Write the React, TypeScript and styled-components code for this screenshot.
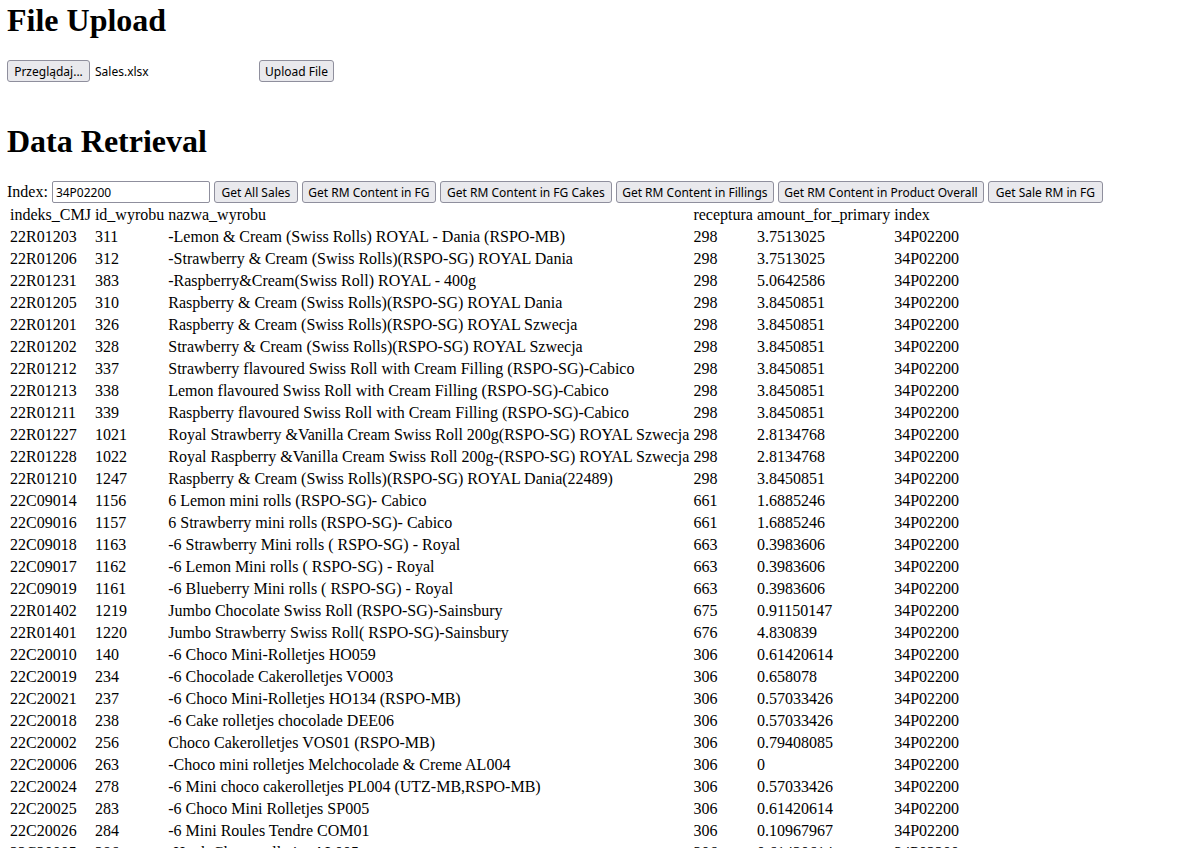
import React, { useRef, useState } from 'react';
import styled, { createGlobalStyle } from 'styled-components';

const GlobalStyle = createGlobalStyle`
  body {
    margin: 0;
    background: #fff;
    color: #000;
    font: 16px/18px "Liberation Serif", "Times New Roman", serif;
  }
`;

const Page = styled.main`
  padding: 2px 7px 8px;
`;

const Title = styled.h1`
  margin: 0 0 22px;
  font-size: 32px;
  line-height: 36px;
  font-weight: bold;
`;

const UploadForm = styled.form`
  display: flex;
  align-items: center;
  margin-bottom: 41px;
`;

const FilePicker = styled.div`
  display: flex;
  align-items: center;
  gap: 5px;
  width: 252px;
`;

const HiddenFile = styled.input`
  display: none;
`;

const FileName = styled.span`
  padding-top: 2px;
  font: 12px/18px "Noto Sans", Tahoma, sans-serif;
`;

const Button = styled.button<{ $width: number }>`
  box-sizing: border-box;
  min-width: ${(p) => p.$width}px;
  height: 22px;
  padding: 2px 4px 0;
  border: 1px solid #8f8f9d;
  border-radius: 3px;
  background: #e9e9ed;
  color: #000;
  font: 12px/18px "Noto Sans", Tahoma, sans-serif;
  white-space: nowrap;
`;

const Toolbar = styled.div`
  display: flex;
  flex-wrap: wrap;
  align-items: center;
  gap: 4px;
`;

const IndexInput = styled.input`
  box-sizing: border-box;
  width: 158px;
  height: 22px;
  padding: 0 3px;
  border: 1px solid #8f8f9d;
  border-radius: 2px;
  background: #fff;
  color: #000;
  font: 12px/18px "Noto Sans", Tahoma, sans-serif;
`;

const DataTable = styled.table`
  border-spacing: 2px;
  white-space: nowrap;
`;

const HeadCell = styled.th`
  padding: 1px;
  font-weight: normal;
  text-align: left;
`;

const Cell = styled.td`
  padding: 1px;
`;

const columns = ['indeks_CMJ', 'id_wyrobu', 'nazwa_wyrobu', 'receptura', 'amount_for_primary', 'index'];

const rows = [
  ['22R01203', '311', '-Lemon & Cream (Swiss Rolls) ROYAL - Dania (RSPO-MB)', '298', '3.7513025'],
  ['22R01206', '312', '-Strawberry & Cream (Swiss Rolls)(RSPO-SG) ROYAL Dania', '298', '3.7513025'],
  ['22R01231', '383', '-Raspberry&Cream(Swiss Roll) ROYAL - 400g', '298', '5.0642586'],
  ['22R01205', '310', 'Raspberry & Cream (Swiss Rolls)(RSPO-SG) ROYAL Dania', '298', '3.8450851'],
  ['22R01201', '326', 'Raspberry & Cream (Swiss Rolls)(RSPO-SG) ROYAL Szwecja', '298', '3.8450851'],
  ['22R01202', '328', 'Strawberry & Cream (Swiss Rolls)(RSPO-SG) ROYAL Szwecja', '298', '3.8450851'],
  ['22R01212', '337', 'Strawberry flavoured Swiss Roll with Cream Filling (RSPO-SG)-Cabico', '298', '3.8450851'],
  ['22R01213', '338', 'Lemon flavoured Swiss Roll with Cream Filling (RSPO-SG)-Cabico', '298', '3.8450851'],
  ['22R01211', '339', 'Raspberry flavoured Swiss Roll with Cream Filling (RSPO-SG)-Cabico', '298', '3.8450851'],
  ['22R01227', '1021', 'Royal Strawberry &Vanilla Cream Swiss Roll 200g(RSPO-SG) ROYAL Szwecja', '298', '2.8134768'],
  ['22R01228', '1022', 'Royal Raspberry &Vanilla Cream Swiss Roll 200g-(RSPO-SG) ROYAL Szwecja', '298', '2.8134768'],
  ['22R01210', '1247', 'Raspberry & Cream (Swiss Rolls)(RSPO-SG) ROYAL Dania(22489)', '298', '3.8450851'],
  ['22C09014', '1156', '6 Lemon mini rolls (RSPO-SG)- Cabico', '661', '1.6885246'],
  ['22C09016', '1157', '6 Strawberry mini rolls (RSPO-SG)- Cabico', '661', '1.6885246'],
  ['22C09018', '1163', '-6 Strawberry Mini rolls ( RSPO-SG) - Royal', '663', '0.3983606'],
  ['22C09017', '1162', '-6 Lemon Mini rolls ( RSPO-SG) - Royal', '663', '0.3983606'],
  ['22C09019', '1161', '-6 Blueberry Mini rolls ( RSPO-SG) - Royal', '663', '0.3983606'],
  ['22R01402', '1219', 'Jumbo Chocolate Swiss Roll (RSPO-SG)-Sainsbury', '675', '0.91150147'],
  ['22R01401', '1220', 'Jumbo Strawberry Swiss Roll( RSPO-SG)-Sainsbury', '676', '4.830839'],
  ['22C20010', '140', '-6 Choco Mini-Rolletjes HO059', '306', '0.61420614'],
  ['22C20019', '234', '-6 Chocolade Cakerolletjes VO003', '306', '0.658078'],
  ['22C20021', '237', '-6 Choco Mini-Rolletjes HO134 (RSPO-MB)', '306', '0.57033426'],
  ['22C20018', '238', '-6 Cake rolletjes chocolade DEE06', '306', '0.57033426'],
  ['22C20002', '256', 'Choco Cakerolletjes VOS01 (RSPO-MB)', '306', '0.79408085'],
  ['22C20006', '263', '-Choco mini rolletjes Melchocolade & Creme AL004', '306', '0'],
  ['22C20024', '278', '-6 Mini choco cakerolletjes PL004 (UTZ-MB,RSPO-MB)', '306', '0.57033426'],
  ['22C20025', '283', '-6 Choco Mini Rolletjes SP005', '306', '0.61420614'],
  ['22C20026', '284', '-6 Mini Roules Tendre COM01', '306', '0.10967967'],
  ['22C20005', '286', '-Hook Choco rolletjes AL005', '306', '0.61420614'],
];

const actions = [
  { label: 'Get All Sales', width: 84 },
  { label: 'Get RM Content in FG', width: 134 },
  { label: 'Get RM Content in FG Cakes', width: 172 },
  { label: 'Get RM Content in Fillings', width: 158 },
  { label: 'Get RM Content in Product Overall', width: 206 },
  { label: 'Get Sale RM in FG', width: 115 },
];

export default function App() {
  const fileRef = useRef<HTMLInputElement>(null);
  const [fileName, setFileName] = useState('Sales.xlsx');
  const [index, setIndex] = useState('34P02200');

  return (
    <>
      <GlobalStyle />
      <Page>
        <Title>File Upload</Title>
        <UploadForm onSubmit={(e) => e.preventDefault()}>
          <FilePicker>
            <HiddenFile
              ref={fileRef}
              type="file"
              aria-label="Sales file"
              onChange={(e) => setFileName(e.target.files?.[0]?.name ?? fileName)}
            />
            <Button type="button" $width={83} onClick={() => fileRef.current?.click()}>
              Przeglądaj...
            </Button>
            <FileName>{fileName}</FileName>
          </FilePicker>
          <Button type="submit" $width={75}>
            Upload File
          </Button>
        </UploadForm>
        <Title>Data Retrieval</Title>
        <Toolbar>
          <label htmlFor="index">Index:</label>
          <IndexInput id="index" type="text" value={index} onChange={(e) => setIndex(e.target.value)} />
          {actions.map(({ label, width }) => (
            <Button key={label} type="button" $width={width}>
              {label}
            </Button>
          ))}
        </Toolbar>
        <DataTable>
          <thead>
            <tr>
              {columns.map((name) => (
                <HeadCell key={name} scope="col">
                  {name}
                </HeadCell>
              ))}
            </tr>
          </thead>
          <tbody>
            {rows.map((row) => (
              <tr key={row[0]}>
                {row.map((value, i) => (
                  <Cell key={columns[i]}>{value}</Cell>
                ))}
                <Cell>34P02200</Cell>
              </tr>
            ))}
          </tbody>
        </DataTable>
      </Page>
    </>
  );
}
